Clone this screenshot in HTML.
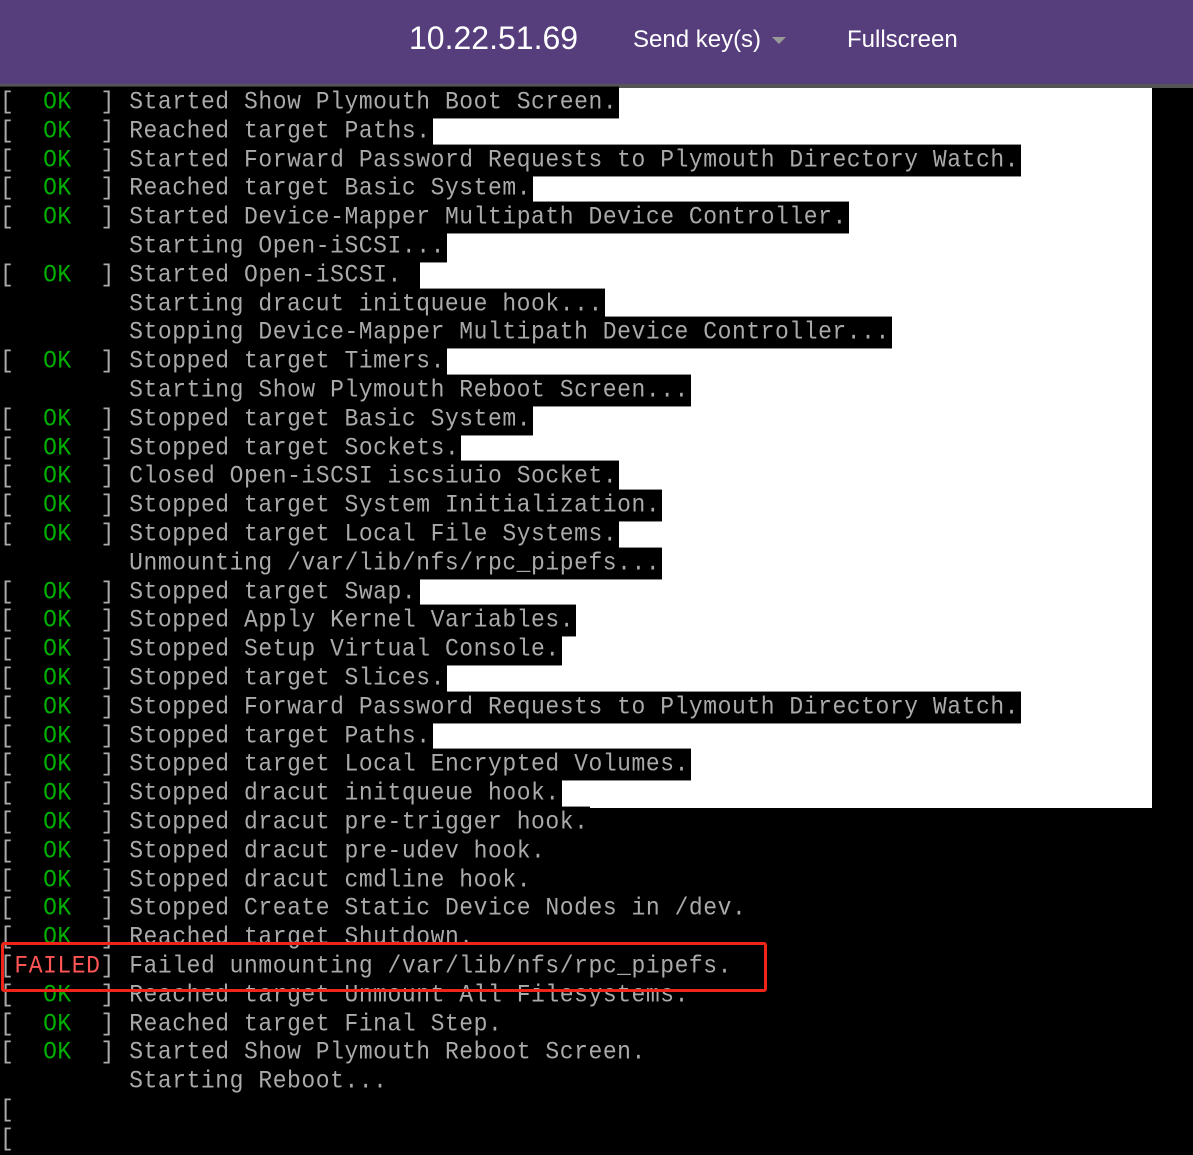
<!DOCTYPE html>
<html><head><meta charset="utf-8"><style>
html,body{margin:0;padding:0;width:1193px;height:1141px;background:#000;overflow:hidden}
.hdr{position:absolute;left:0;top:0;width:1193px;height:84px;background:#563d7c;border-bottom:4px solid #555;font-family:"Liberation Sans",sans-serif;color:#fff}
.ip{position:absolute;left:409px;top:20px;font-size:32px}
.sk{position:absolute;left:633px;top:26px;font-size:24px}
.tri{display:inline-block;width:0;height:0;border-left:7px solid transparent;border-right:7px solid transparent;border-top:7px solid #999;margin-left:11px;vertical-align:middle}
.fs{position:absolute;left:847px;top:26px;font-size:24px}
.white{position:absolute;left:420px;top:88px;width:732px;height:720px;background:#fff}
.con{position:absolute;left:0;top:88px;font-family:"Liberation Mono",monospace;font-size:23px;letter-spacing:0.55px;color:#aaa}
.l{height:28.8px;line-height:28.8px;white-space:pre}
.l span.b{display:inline-block;background:#000;height:28.8px;padding-right:2px;transform:scaleY(1.1)}
.g{color:#00b000}.r{color:#ff5555}
.box{position:absolute;left:1px;top:942px;width:760px;height:44px;border:3px solid #f02418;border-radius:3px}
</style></head><body>
<div class="hdr"><div class="ip">10.22.51.69</div><div class="sk">Send key(s)<span class="tri"></span></div><div class="fs">Fullscreen</div></div>
<div class="white"></div>
<div class="con"><div class="l"><span class="b">[  <span class="g">OK</span>  ] Started Show Plymouth Boot Screen.</span></div><div class="l"><span class="b">[  <span class="g">OK</span>  ] Reached target Paths.</span></div><div class="l"><span class="b">[  <span class="g">OK</span>  ] Started Forward Password Requests to Plymouth Directory Watch.</span></div><div class="l"><span class="b">[  <span class="g">OK</span>  ] Reached target Basic System.</span></div><div class="l"><span class="b">[  <span class="g">OK</span>  ] Started Device-Mapper Multipath Device Controller.</span></div><div class="l"><span class="b">         Starting Open-iSCSI...</span></div><div class="l"><span class="b">[  <span class="g">OK</span>  ] Started Open-iSCSI.</span></div><div class="l"><span class="b">         Starting dracut initqueue hook...</span></div><div class="l"><span class="b">         Stopping Device-Mapper Multipath Device Controller...</span></div><div class="l"><span class="b">[  <span class="g">OK</span>  ] Stopped target Timers.</span></div><div class="l"><span class="b">         Starting Show Plymouth Reboot Screen...</span></div><div class="l"><span class="b">[  <span class="g">OK</span>  ] Stopped target Basic System.</span></div><div class="l"><span class="b">[  <span class="g">OK</span>  ] Stopped target Sockets.</span></div><div class="l"><span class="b">[  <span class="g">OK</span>  ] Closed Open-iSCSI iscsiuio Socket.</span></div><div class="l"><span class="b">[  <span class="g">OK</span>  ] Stopped target System Initialization.</span></div><div class="l"><span class="b">[  <span class="g">OK</span>  ] Stopped target Local File Systems.</span></div><div class="l"><span class="b">         Unmounting /var/lib/nfs/rpc_pipefs...</span></div><div class="l"><span class="b">[  <span class="g">OK</span>  ] Stopped target Swap.</span></div><div class="l"><span class="b">[  <span class="g">OK</span>  ] Stopped Apply Kernel Variables.</span></div><div class="l"><span class="b">[  <span class="g">OK</span>  ] Stopped Setup Virtual Console.</span></div><div class="l"><span class="b">[  <span class="g">OK</span>  ] Stopped target Slices.</span></div><div class="l"><span class="b">[  <span class="g">OK</span>  ] Stopped Forward Password Requests to Plymouth Directory Watch.</span></div><div class="l"><span class="b">[  <span class="g">OK</span>  ] Stopped target Paths.</span></div><div class="l"><span class="b">[  <span class="g">OK</span>  ] Stopped target Local Encrypted Volumes.</span></div><div class="l"><span class="b">[  <span class="g">OK</span>  ] Stopped dracut initqueue hook.</span></div><div class="l"><span class="b">[  <span class="g">OK</span>  ] Stopped dracut pre-trigger hook.</span></div><div class="l"><span class="b">[  <span class="g">OK</span>  ] Stopped dracut pre-udev hook.</span></div><div class="l"><span class="b">[  <span class="g">OK</span>  ] Stopped dracut cmdline hook.</span></div><div class="l"><span class="b">[  <span class="g">OK</span>  ] Stopped Create Static Device Nodes in /dev.</span></div><div class="l"><span class="b">[  <span class="g">OK</span>  ] Reached target Shutdown.</span></div><div class="l"><span class="b">[<span class="r">FAILED</span>] Failed unmounting /var/lib/nfs/rpc_pipefs.</span></div><div class="l"><span class="b">[  <span class="g">OK</span>  ] Reached target Unmount All Filesystems.</span></div><div class="l"><span class="b">[  <span class="g">OK</span>  ] Reached target Final Step.</span></div><div class="l"><span class="b">[  <span class="g">OK</span>  ] Started Show Plymouth Reboot Screen.</span></div><div class="l"><span class="b">         Starting Reboot...</span></div><div class="l"><span class="b">[</span></div><div class="l"><span class="b">[</span></div></div>
<div class="box"></div>
</body></html>
